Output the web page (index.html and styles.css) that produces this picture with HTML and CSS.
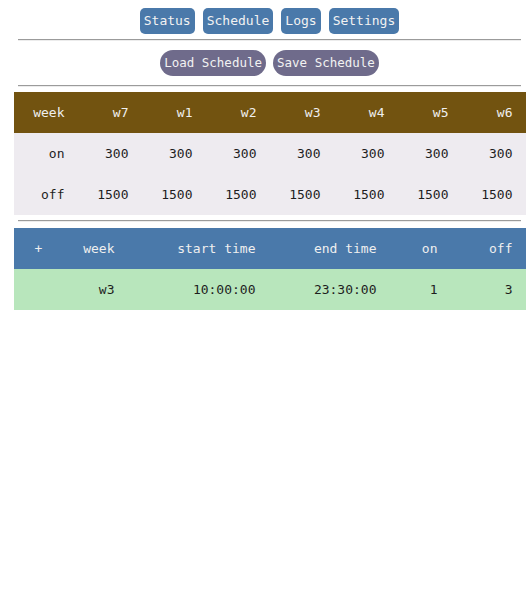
FILE: index.html
```html
<!DOCTYPE html>
<html>
<head>
<meta charset="utf-8">
<link rel="stylesheet" href="styles.css">
</head>
<body>
<div class="page">
  <nav class="nav">
    <button class="tab">Status</button>
    <button class="tab">Schedule</button>
    <button class="tab">Logs</button>
    <button class="tab">Settings</button>
  </nav>
  <hr class="rule rule-a">
  <div class="actions">
    <button class="pill">Load Schedule</button>
    <button class="pill">Save Schedule</button>
  </div>
  <hr class="rule rule-b">
  <table class="grid week-table">
    <colgroup>
      <col class="wk"><col class="wk"><col class="wk"><col class="wk"><col class="wk"><col class="wk"><col class="wk"><col class="wk">
    </colgroup>
    <thead>
      <tr><th>week</th><th>w7</th><th>w1</th><th>w2</th><th>w3</th><th>w4</th><th>w5</th><th>w6</th></tr>
    </thead>
    <tbody>
      <tr><td>on</td><td>300</td><td>300</td><td>300</td><td>300</td><td>300</td><td>300</td><td>300</td></tr>
      <tr><td>off</td><td>1500</td><td>1500</td><td>1500</td><td>1500</td><td>1500</td><td>1500</td><td>1500</td></tr>
    </tbody>
  </table>
  <hr class="rule rule-c">
  <table class="grid sched-table">
    <colgroup>
      <col class="c1"><col class="c2"><col class="c3"><col class="c4"><col class="c5"><col class="c6">
    </colgroup>
    <thead>
      <tr><th class="plus">+</th><th>week</th><th>start time</th><th>end time</th><th>on</th><th>off</th></tr>
    </thead>
    <tbody>
      <tr><td></td><td>w3</td><td>10:00:00</td><td>23:30:00</td><td>1</td><td>3</td></tr>
    </tbody>
  </table>
</div>
</body>
</html>
```

FILE: styles.css
```css
html, body {
  background: #ffffff;
}
body {
  margin: 8px 0 0 8px;
  font-family: "DejaVu Sans Mono", monospace;
  font-size: 13px;
}
.page {
  display: flex;
  flex-direction: column;
  align-items: center;
}
.nav, .actions {
  display: flex;
  justify-content: center;
  gap: 8px;
}
.actions {
  gap: 7px;
}
button {
  font-family: "DejaVu Sans Mono", monospace;
  font-size: 13px;
  line-height: 16px;
  color: #f2f2f2;
  border: 0;
  margin: 0;
  cursor: pointer;
}
.tab {
  background: #4a79aa;
  border-radius: 5px;
  padding: 5px 4px;
  height: 26px;
}
.pill {
  background: #6f6b8b;
  border-radius: 13px;
  padding: 5px 4px;
  height: 26px;
  font-size: 12.5px;
}
.rule {
  width: 503px;
  height: 0;
  border: 0;
  border-top: 1px solid #9b9b9b;
  border-bottom: 1px solid #ececec;
  margin: 0;
}
.rule-a { margin: 5px 0 9px; }
.rule-b { margin: 9px 0 5px; }
.rule-c { margin: 5px 0 6px; }
.grid {
  border-collapse: collapse;
  width: 512px;
  table-layout: fixed;
}
.grid th, .grid td {
  height: 41px;
  padding: 0 13px 0 0;
  text-align: right;
  font-weight: normal;
  line-height: 15px;
  white-space: nowrap;
  box-sizing: border-box;
}
.wk { width: 64px; }
.week-table thead tr {
  background: #725310;
  color: #efefef;
}
.week-table tbody tr {
  background: #eeebf0;
  color: #1e1e1e;
}
.sched-table thead tr {
  background: #4a79aa;
  color: #efefef;
}
.sched-table tbody tr {
  background: #b8e6bc;
  color: #1e1e1e;
}
.sched-table .plus {
  text-align: center;
  padding: 0 0 0 8px;
}
.c1 { width: 42px; }
.c2 { width: 72px; }
.c3 { width: 141px; }
.c4 { width: 121px; }
.c5 { width: 61px; }
.c6 { width: 75px; }
```
